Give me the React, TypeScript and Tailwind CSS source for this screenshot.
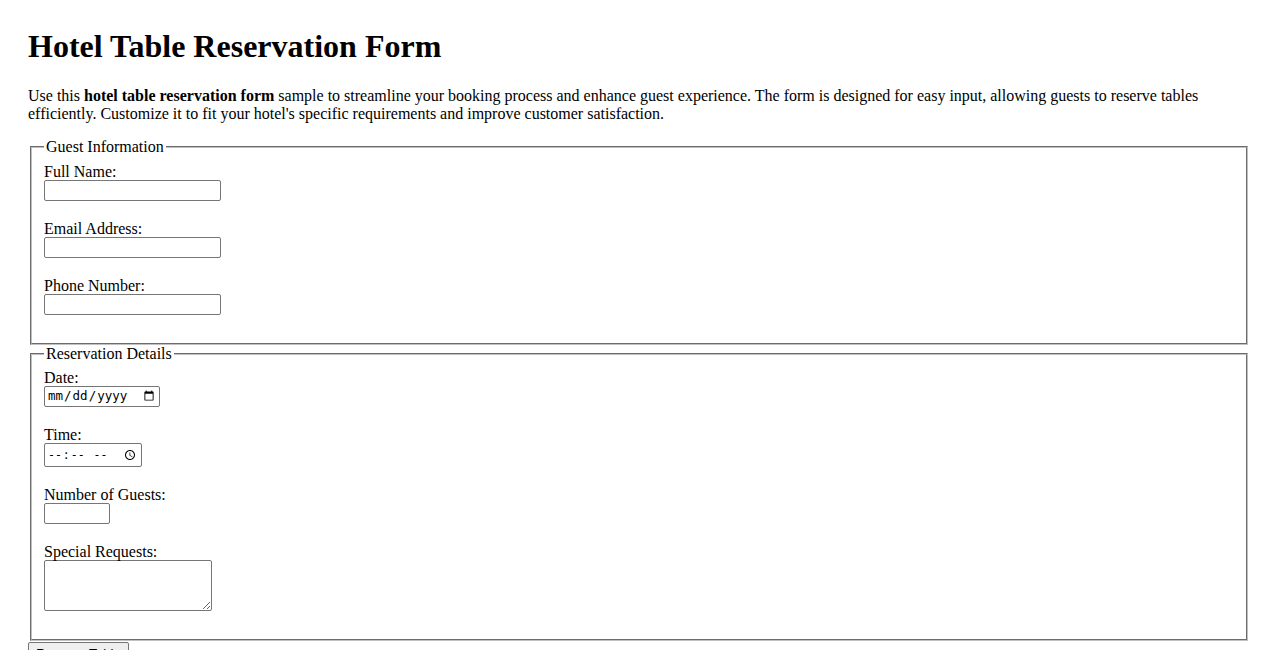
import React from 'react';

const serif = "font-['Liberation_Serif','Times_New_Roman',serif]";
const control = 'block rounded-[2px] border border-[#767676] bg-white px-[2px] py-[1px] text-black';
const sans = "font-['Liberation_Sans',Arial,sans-serif] text-[13.333px]";
const mono = "font-['DejaVu_Sans_Mono','Liberation_Mono',monospace]";

type FieldProps = {
  label: string;
  children: React.ReactNode;
};

function Field({ label, children }: FieldProps) {
  return (
    <div className="mb-[18px]">
      <label className="block pt-[1px] leading-[17px]">{label}</label>
      {children}
    </div>
  );
}

function Section({ legend, children }: { legend: string; children: React.ReactNode }) {
  return (
    <fieldset className="mx-[2px] min-w-0 border-2 border-[#c0c0c0] [border-style:groove] px-[12px] pt-[5.6px] pb-[10px]">
      <legend className="px-[2px] leading-[18px]">{legend}</legend>
      {children}
    </fieldset>
  );
}

export default function App() {
  return (
    <div className={`${serif} min-h-[650px] bg-white px-[28px] pt-[28px] text-[16px] text-black`}>
      <h1 className="text-[32px] font-bold leading-[37px]">Hotel Table Reservation Form</h1>
      <p className="mt-[22px] mb-[15px] leading-[18px]">
        Use this <strong>hotel table reservation form</strong> sample to streamline your booking process and enhance guest
        experience. The form is designed for easy input, allowing guests to reserve tables efficiently. Customize it to
        fit your hotel's specific requirements and improve customer satisfaction.
      </p>
      <form>
        <Section legend="Guest Information">
          <Field label="Full Name:">
            <input type="text" className={`${control} ${sans} h-[21px] w-[177px]`} />
          </Field>
          <Field label="Email Address:">
            <input type="email" className={`${control} ${sans} h-[21px] w-[177px]`} />
          </Field>
          <Field label="Phone Number:">
            <input type="tel" className={`${control} ${sans} h-[21px] w-[177px]`} />
          </Field>
        </Section>
        <Section legend="Reservation Details">
          <Field label="Date:">
            <input type="date" className={`${control} ${mono} h-[21px] w-[116px] text-[12.5px]`} />
          </Field>
          <Field label="Time:">
            <input type="time" className={`${control} ${mono} h-[24px] w-[98px] text-[11.5px]`} />
          </Field>
          <Field label="Number of Guests:">
            <input type="number" className={`${control} ${sans} h-[21px] w-[66px]`} />
          </Field>
          <Field label="Special Requests:">
            <textarea className={`${control} ${mono} h-[51px] w-[168px] resize text-[13.333px]`} />
          </Field>
        </Section>
        <button
          type="submit"
          className={`${sans} mt-[1px] h-[21px] rounded-[2px] border border-[#767676] bg-[#efefef] px-[7px] py-[1px] text-black`}
        >
          Reserve Table
        </button>
      </form>
    </div>
  );
}
